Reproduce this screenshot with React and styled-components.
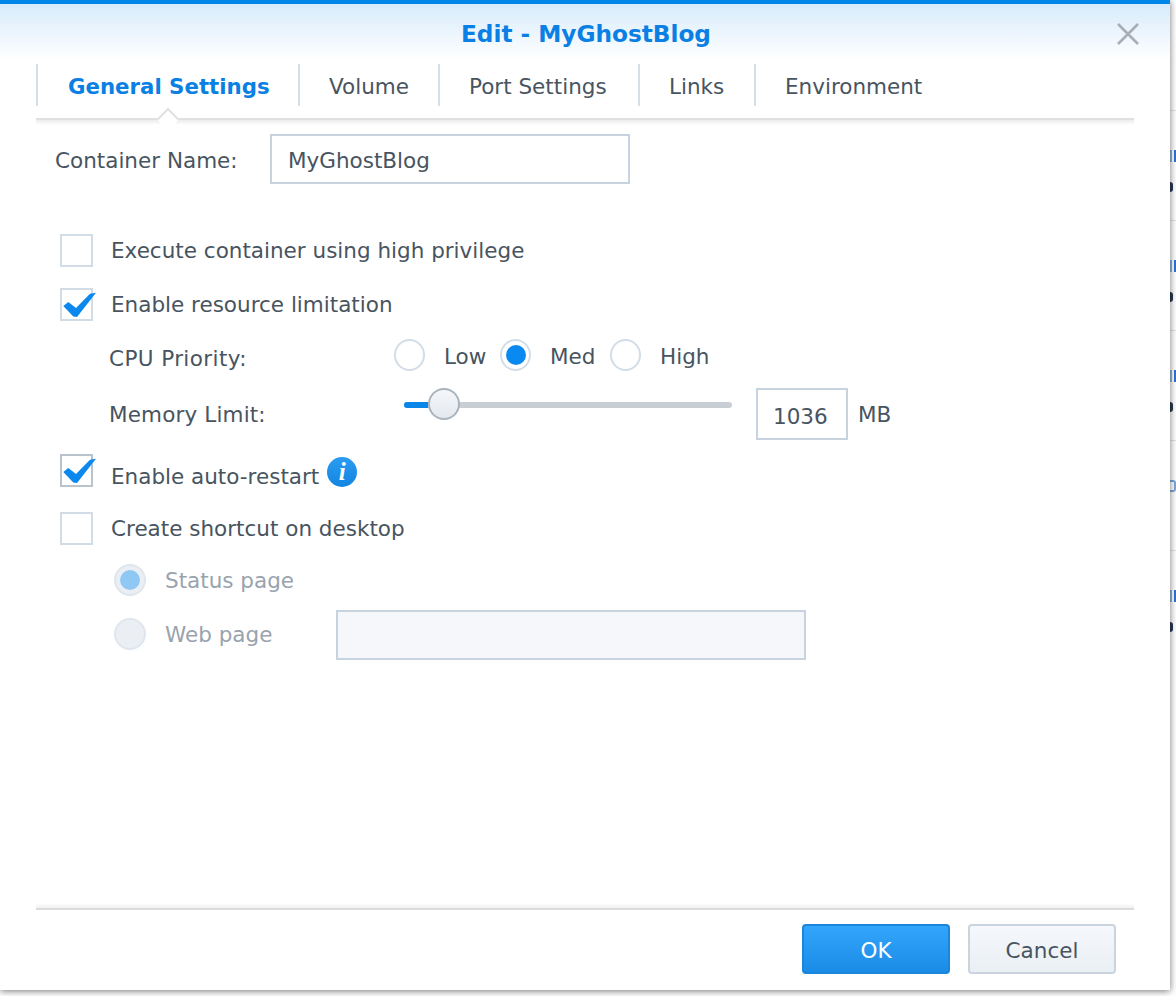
import React from 'react';
import styled, { createGlobalStyle } from 'styled-components';

const Global = createGlobalStyle`
  html, body { margin: 0; padding: 0; background: #fff; overflow: hidden; }
  * { box-sizing: border-box; }
`;

const Page = styled.div`
  display: flex;
  width: 1176px;
  height: 996px;
  font-family: "DejaVu Sans", Verdana, sans-serif;
  font-size: 21.5px;
  color: #485460;
  overflow: hidden;
`;

const Dialog = styled.div`
  position: relative;
  z-index: 1;
  display: flex;
  flex-direction: column;
  flex: none;
  width: 1170px;
  height: 990px;
  background: #fff;
  box-shadow: 0 1px 7px rgba(0, 0, 0, 0.55);
`;

const Header = styled.div`
  position: relative;
  display: flex;
  align-items: center;
  justify-content: center;
  flex: none;
  height: 60px;
  padding: 3px 0 0 2px;
  border-top: 4px solid #0086e8;
  background: linear-gradient(#d8ebfb, #ffffff);
`;

const Title = styled.div`
  font-size: 23.2px;
  font-weight: 700;
  color: #0a80e4;
`;

const Close = styled.svg`
  position: absolute;
  left: 1116px;
  top: 19px;
  width: 24px;
  height: 22px;
`;

const TabBar = styled.div`
  position: relative;
  display: flex;
  flex: none;
  height: 60px;
  margin: 0 36px;
  padding-top: 4px;
  border-bottom: 2px solid #e0e0e0;
`;

const Tab = styled.div`
  display: flex;
  align-items: center;
  flex: none;
  width: ${p => p.$w}px;
  height: 42px;
  padding: 2px 0 0 ${p => (p.$active ? 30 : 29)}px;
  border-left: 2px solid #d5dfe9;
  white-space: nowrap;
  font-size: ${p => (p.$active ? '21.3px' : '21.5px')};
  font-weight: ${p => (p.$active ? 700 : 400)};
  color: ${p => (p.$active ? '#0a80e4' : '#485460')};
`;

const Notch = styled.div`
  position: absolute;
  left: 124px;
  bottom: -9px;
  width: 16px;
  height: 16px;
  background: #fff;
  border-top: 2px solid #e0e0e0;
  border-left: 2px solid #e0e0e0;
  transform: rotate(45deg);
`;

const RuleShade = styled.div`
  flex: none;
  height: 5px;
  margin: 0 36px;
  background: linear-gradient(#ececec, #ffffff);
`;

const Form = styled.div`
  display: flex;
  flex-direction: column;
  flex: 1;
`;

const NameRow = styled.div`
  display: flex;
  align-items: center;
  margin: 9px 0 50px 55px;
`;

const NameLabel = styled.div`
  position: relative;
  top: 1px;
  width: 215px;
`;

const TextBox = styled.div`
  display: flex;
  align-items: center;
  flex: none;
  width: ${p => p.$w}px;
  height: ${p => p.$h}px;
  padding: ${p => p.$down || 0}px 0 0 ${p => p.$pad || 0}px;
  border: 2px solid #c7d3df;
  background: ${p => (p.$disabled ? '#f5f7fa' : '#fff')};
`;

const CheckRow = styled.div`
  display: flex;
  align-items: center;
  height: 32px;
  margin: ${p => p.$top}px 0 0 60px;
`;

const Box = styled.div`
  position: relative;
  flex: none;
  width: 33px;
  height: 33px;
  margin-right: 18px;
  border: 2px solid ${p => (p.$dark ? '#b9c3cd' : '#d2dce6')};
`;

const Tick = styled.svg`
  position: absolute;
  left: -2px;
  top: -2px;
  width: 40px;
  height: 36px;
  overflow: visible;
`;

const CheckText = styled.span`
  position: relative;
  top: ${p => p.$down || 0}px;
`;

const SubRow = styled.div`
  display: flex;
  align-items: center;
  height: ${p => p.$h}px;
  margin: ${p => p.$top}px 0 0 109px;
`;

const SubLabel = styled.div`
  position: relative;
  top: ${p => p.$down || 0}px;
  flex: none;
  width: 285px;
  letter-spacing: ${p => p.$spacing}px;
`;

const Radio = styled.div`
  display: flex;
  align-items: center;
  justify-content: center;
  flex: none;
  width: 31px;
  height: 32px;
  border: 2px solid #d3dde7;
  border-radius: 50%;
  background: #fff;
`;

const RadioDot = styled.div`
  width: 20px;
  height: 20px;
  border-radius: 50%;
  background: #0a8af0;
`;

const RadioText = styled.span`
  position: relative;
  top: 1px;
  flex: none;
  width: ${p => p.$w}px;
  margin-left: 19px;
`;

const Slider = styled.div`
  position: relative;
  flex: none;
  width: 328px;
  height: 6px;
  margin: -18px 24px 0 10px;
  border-radius: 3px;
  background: #c8ced3;
`;

const SliderFill = styled.div`
  height: 6px;
  border-radius: 3px 0 0 3px;
  background: #0a86e8;
`;

const Thumb = styled.div`
  position: absolute;
  left: 24px;
  top: -14px;
  width: 32px;
  height: 32px;
  border: 2px solid #aab4bd;
  border-radius: 50%;
  background: linear-gradient(#f5f7f9, #e4e9ee);
`;

const Unit = styled.span`
  margin-left: 10px;
`;

const Info = styled.div`
  position: relative;
  top: 2px;
  display: flex;
  align-items: center;
  justify-content: center;
  flex: none;
  width: 30px;
  height: 30px;
  margin-left: 8px;
  border-radius: 50%;
  background: linear-gradient(#2a9cf2, #1285e2);
  color: #fff;
  font-family: "Liberation Serif", serif;
  font-style: italic;
  font-weight: 700;
  font-size: 25px;
`;

const OptionRow = styled.div`
  display: flex;
  align-items: center;
  height: ${p => p.$h}px;
  margin: ${p => p.$top}px 0 0 114px;
  color: #98a3ae;
`;

const OptionRadio = styled.div`
  display: flex;
  align-items: center;
  justify-content: center;
  flex: none;
  width: 32px;
  height: 32px;
  margin: 0 19px ${p => p.$lift || 0}px 0;
  border: 2px solid #dfe6ee;
  border-radius: 50%;
  background: #ebeff4;
`;

const OptionDot = styled.div`
  width: 20px;
  height: 20px;
  border-radius: 50%;
  background: #8fc8f5;
`;

const OptionName = styled.div`
  flex: none;
  width: 171px;
  margin-bottom: ${p => p.$lift || 0}px;
`;

const Footer = styled.div`
  display: flex;
  flex: none;
  justify-content: flex-end;
  gap: 18px;
  height: 80px;
  margin: 0 18px 0 36px;
  padding: 14px 36px 0 0;
`;

const FooterRule = styled.div`
  flex: none;
  height: 7px;
  margin: auto 36px 0;
  border-bottom: 2px solid #dcdcdc;
  background: linear-gradient(#ffffff, #f0f0f0);
`;

const Button = styled.div`
  display: flex;
  align-items: center;
  justify-content: center;
  width: 148px;
  height: 50px;
  padding-top: 2px;
  border-radius: 4px;
  border: 2px solid ${p => (p.$primary ? '#1a86dc' : '#c9d4df')};
  background: ${p => (p.$primary
    ? 'linear-gradient(#33a5fd, #1a8ce6)'
    : 'linear-gradient(#f5f8fc, #eaeff4)')};
  color: ${p => (p.$primary ? '#fff' : '#485460')};
`;

// bits of the page behind the dialog
const BehindStrip = styled.div`
  display: flex;
  flex: none;
  flex-direction: column;
  width: 6px;
  padding-top: 110px;
`;

const BehindRow = styled.div`
  display: flex;
  flex-direction: column;
  flex: none;
  height: 110px;
  padding-top: 39px;
  border-top: 1px solid #e4e4e4;
`;

const BlueMark = styled.div`
  width: 6px;
  height: 12px;
  background: linear-gradient(90deg, #8fb7e6 0 2px, #fff 2px 4px, #2f74d0 4px);
`;

const DarkMark = styled.div`
  width: 3px;
  height: 10px;
  margin-top: 20px;
  border-radius: 0 5px 5px 0;
  background: #2a3a52;
`;

const RingMark = styled.div`
  width: 6px;
  height: 12px;
  border: 2px solid #7aa8dc;
  border-left: none;
  border-radius: 0 3px 3px 0;
`;

const Check = ({ on, dark, top, down, children }) => (
  <CheckRow $top={top}>
    <Box $dark={dark}>
      {on && (
        <Tick viewBox="0 0 40 36">
          <path d="M3.3 18 L8.3 14 L16 20 L30 5.8 L36 4.7 L17 29 L13.3 28.6 Z" fill="#0a88ee" />
        </Tick>
      )}
    </Box>
    <CheckText $down={down}>{children}</CheckText>
    {dark && <Info>i</Info>}
  </CheckRow>
);

const tabs = [
  { name: 'General Settings', w: 262 },
  { name: 'Volume', w: 140 },
  { name: 'Port Settings', w: 200 },
  { name: 'Links', w: 116 },
  { name: 'Environment', w: 200 },
];

export default function App() {
  return (
    <Page>
      <Global />
      <Dialog>
        <Header>
          <Title>Edit - MyGhostBlog</Title>
          <Close viewBox="0 0 24 22">
            <path d="M2 1 L22 21 M22 1 L2 21" stroke="#a7aeb5" strokeWidth="2.6" fill="none" />
          </Close>
        </Header>
        <TabBar>
          {tabs.map((t, i) => (
            <Tab key={t.name} $w={t.w} $active={i === 0}>{t.name}</Tab>
          ))}
          <Notch />
        </TabBar>
        <RuleShade />
        <Form>
          <NameRow>
            <NameLabel>Container Name:</NameLabel>
            <TextBox $w={360} $h={50} $pad={16} $down={2}>MyGhostBlog</TextBox>
          </NameRow>
          <Check top={0}>Execute container using high privilege</Check>
          <Check on top={22}>Enable resource limitation</Check>
          <SubRow $h={32} $top={19}>
            <SubLabel $down={3} $spacing={0.4}>CPU Priority:</SubLabel>
            <Radio />
            <RadioText $w={56}>Low</RadioText>
            <Radio><RadioDot /></Radio>
            <RadioText $w={60}>Med</RadioText>
            <Radio />
            <RadioText $w={60}>High</RadioText>
          </SubRow>
          <SubRow $h={52} $top={17}>
            <SubLabel $spacing={0.15}>Memory Limit:</SubLabel>
            <Slider>
              <SliderFill style={{ width: 24 }} />
              <Thumb />
            </Slider>
            <TextBox $w={92} $h={52} $pad={15} $down={4}>1036</TextBox>
            <Unit>MB</Unit>
          </SubRow>
          <Check on dark top={14} down={6}>Enable auto-restart</Check>
          <Check top={26}>Create shortcut on desktop</Check>
          <OptionRow $h={32} $top={20}>
            <OptionRadio><OptionDot /></OptionRadio>
            <OptionName>Status page</OptionName>
          </OptionRow>
          <OptionRow $h={50} $top={14}>
            <OptionRadio $lift={2} />
            <OptionName $lift={2}>Web page</OptionName>
            <TextBox $w={470} $h={50} $disabled />
          </OptionRow>
          <FooterRule />
          <Footer>
            <Button $primary>OK</Button>
            <Button>Cancel</Button>
          </Footer>
        </Form>
      </Dialog>
      <BehindStrip>
        <BehindRow><BlueMark /><DarkMark /></BehindRow>
        <BehindRow><BlueMark /><DarkMark /></BehindRow>
        <BehindRow><BlueMark /><DarkMark /></BehindRow>
        <BehindRow><RingMark /></BehindRow>
        <BehindRow><BlueMark /><DarkMark /></BehindRow>
      </BehindStrip>
    </Page>
  );
}
